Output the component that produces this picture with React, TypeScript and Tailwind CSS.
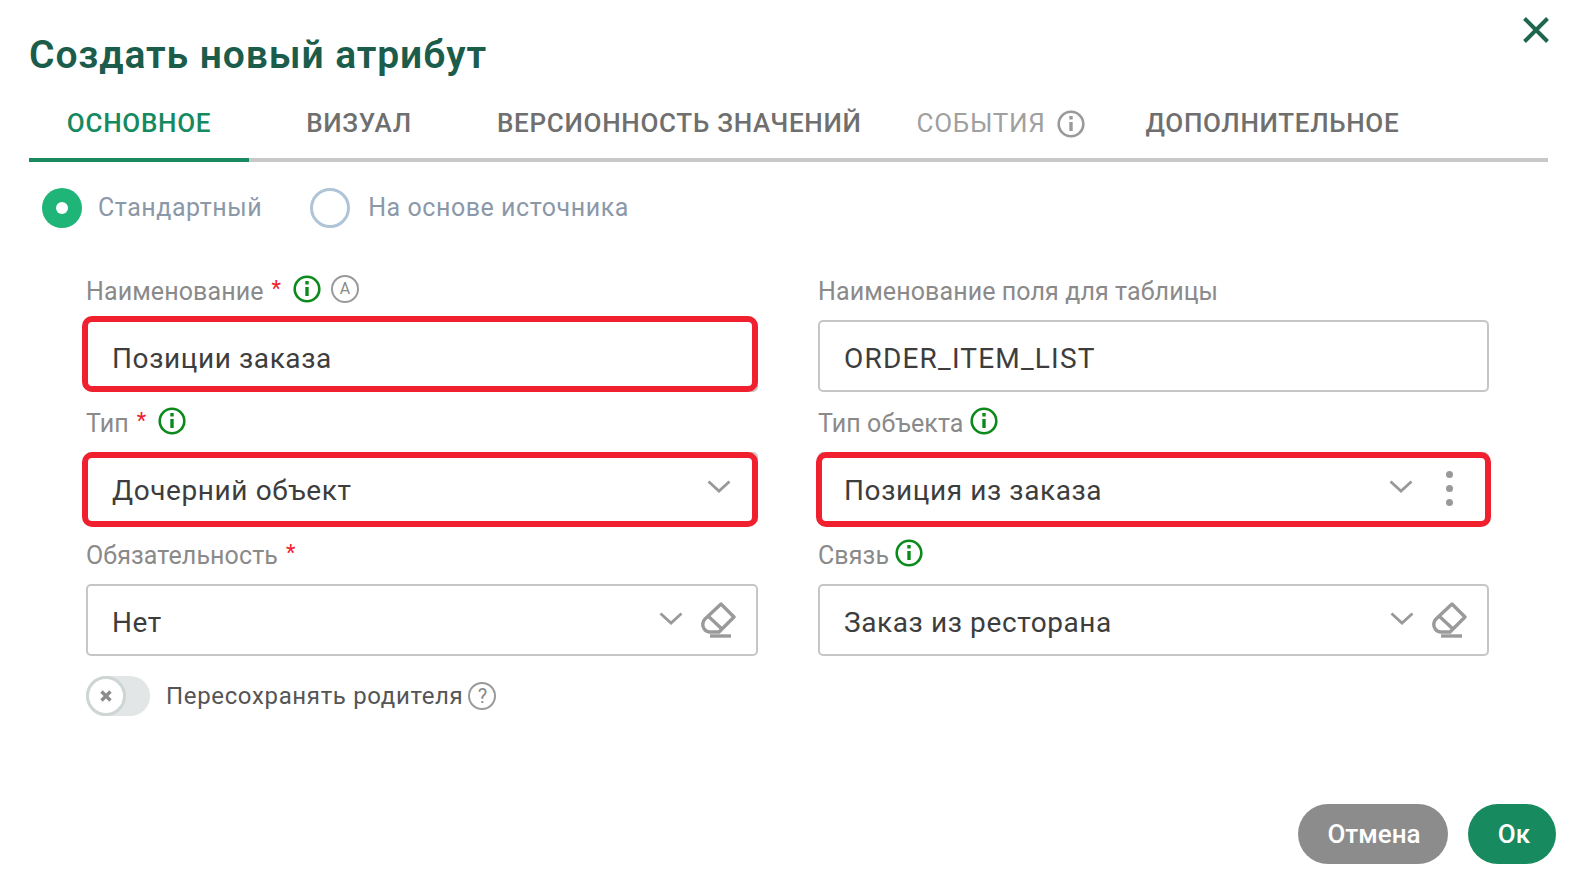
import React from 'react';

const InfoIcon = ({ color = 'text-[#0b8a1c]' }: { color?: string }) => (
    <svg viewBox="0 0 28 28" className={`h-7 w-7 shrink-0 ${color}`} fill="none" stroke="currentColor">
        <circle cx="14" cy="14" r="12.3" strokeWidth="2.6" />
        <path d="M14 12v9" strokeWidth="3.4" />
        <path d="M14 6v3.5" strokeWidth="3.4" />
    </svg>
);

const Chevron = () => (
    <svg viewBox="0 0 24 13" className="-mt-[3px] h-[13px] w-6 shrink-0" fill="none" stroke="#999999" strokeWidth="2.8">
        <path d="M1.5 1.5 12 11 22.5 1.5" />
    </svg>
);

const EraserIcon = () => (
    <svg viewBox="0 0 36 36" className="h-9 w-9 shrink-0" fill="none" stroke="#9a9a9a" strokeWidth="3.4">
        <path d="M21 2 34 15 19 30 H10 C5 30 2 25 3 21 C3 19 4 18 5 17 Z" strokeLinejoin="round" />
        <path d="M8 14 22 27" />
        <path d="M10 34H31" />
    </svg>
);

const Label = ({ text, required, children }: { text: string; required?: boolean; children?: React.ReactNode }) => (
    <div className="flex h-[29px] items-center text-[25px] leading-[29px] tracking-[0.1px] text-[#8a8a8a]">
        <span>{text}</span>
        {required && <span className="ml-2 mr-[6px] -mt-1.5 text-[22px] text-[#f0202f]">*</span>}
        {children && <span className="ml-[6px] flex items-center gap-[10px] -mt-1.5">{children}</span>}
    </div>
);

const Field = ({
    value,
    highlight,
    valueClass = 'tracking-[0.6px]',
    children,
}: {
    value: string;
    highlight?: string;
    valueClass?: string;
    children?: React.ReactNode;
}) => (
    <div className="relative mt-[14px] flex h-[72px] items-center rounded-[5px] border-2 border-[#c6c6c6] pl-[24px] pr-[25px] text-[28px] text-[#3d3d3d]">
        <span className={`flex-1 pt-[6px] ${valueClass}`}>{value}</span>
        {children}
        {highlight && <div className={`absolute rounded-[10px] border-[6px] border-[#f0202f] ${highlight}`} />}
    </div>
);

const Tab = ({ text, active, muted, children }: { text: string; active?: boolean; muted?: boolean; children?: React.ReactNode }) => (
    <div
        className={`-mb-1 flex h-[75px] min-w-[220px] items-center justify-center gap-3 border-b-4 pt-[2px] text-[26px] tracking-[0.7px] uppercase ${
            muted ? 'pl-[27px] pr-[32px]' : 'px-7'
        } ${active ? 'border-[#178a5f] font-medium text-[#15895f]' : 'border-transparent'} ${
            muted ? 'text-[#a0a0a0]' : active ? '' : 'font-medium text-[#6f6f6f]'
        }`}
    >
        <span>{text}</span>
        {children}
    </div>
);

const App: React.FC = () => {
    return (
        <div className="relative h-[874px] w-[1574px] overflow-hidden bg-white font-['Roboto',sans-serif]">
            <button className="absolute right-[25px] top-[17px] text-[#1f6650]">
                <svg viewBox="0 0 26 26" className="h-[26px] w-[26px]" stroke="currentColor" strokeWidth="4">
                    <path d="M1.5 1.5 24.5 24.5M24.5 1.5 1.5 24.5" />
                </svg>
            </button>

            <div className="pl-[29px] pr-[26px]">
                <h1 className="pt-[32px] text-[39px] leading-[46px] font-semibold tracking-[0.9px] text-[#1b5c4b]">Создать новый атрибут</h1>

                <div className="mt-[9px] flex border-b-4 border-[#c8c8c8]">
                    <Tab text="Основное" active />
                    <Tab text="Визуал" />
                    <Tab text="Версионность значений" />
                    <Tab text="События" muted>
                        <InfoIcon color="text-[#9a9a9a]" />
                    </Tab>
                    <Tab text="Дополнительное" />
                </div>

                <div className="mt-[26px] flex items-center pl-[13px] text-[25px] tracking-[0.55px] text-[#8b98a8]">
                    <span className="flex h-10 w-10 items-center justify-center rounded-full bg-[#1fb578]">
                        <span className="h-3 w-3 rounded-full bg-white" />
                    </span>
                    <span className="ml-4">Стандартный</span>
                    <span className="ml-[48px] h-10 w-10 rounded-full border-[3px] border-[#b0c4d8]" />
                    <span className="ml-[18px]">На основе источника</span>
                </div>

                <div className="mt-[49px] grid grid-cols-[672px_671px] gap-x-[60px] gap-y-[17px] pl-[57px]">
                    <div>
                        <Label text="Наименование" required>
                            <InfoIcon />
                            <span className="flex h-7 w-7 items-center justify-center rounded-full border-2 border-[#9a9a9a] text-[16px] text-[#8a8a8a]">A</span>
                        </Label>
                        <Field value="Позиции заказа" highlight="-left-[6px] -right-[2px] -top-[6px] -bottom-[2px]" />
                    </div>
                    <div>
                        <Label text="Наименование поля для таблицы" />
                        <Field value="ORDER_ITEM_LIST" valueClass="tracking-[1.2px]" />
                    </div>
                    <div>
                        <Label text="Тип" required>
                            <InfoIcon />
                        </Label>
                        <Field value="Дочерний объект" highlight="-left-[6px] -right-[2px] -top-[2px] -bottom-[5px]">
                            <Chevron />
                        </Field>
                    </div>
                    <div>
                        <Label text="Тип объекта">
                            <InfoIcon />
                        </Label>
                        <Field value="Позиция из заказа" highlight="-left-[4px] -right-[4px] -top-[2px] -bottom-[5px]">
                            <Chevron />
                            <span className="ml-[33px] mr-[9px] flex flex-col gap-[7px]">
                                <span className="h-[7px] w-[7px] rounded-full bg-[#999999]" />
                                <span className="h-[7px] w-[7px] rounded-full bg-[#999999]" />
                                <span className="h-[7px] w-[7px] rounded-full bg-[#999999]" />
                            </span>
                        </Field>
                    </div>
                    <div>
                        <Label text="Обязательность" required />
                        <Field value="Нет">
                            <Chevron />
                            <span className="ml-[17px] -mr-[5px]">
                                <EraserIcon />
                            </span>
                        </Field>
                    </div>
                    <div>
                        <Label text="Связь">
                            <InfoIcon />
                        </Label>
                        <Field value="Заказ из ресторана">
                            <Chevron />
                            <span className="ml-[17px] -mr-[5px]">
                                <EraserIcon />
                            </span>
                        </Field>
                    </div>
                </div>

                <div className="mt-[20px] flex items-center pl-[57px]">
                    <span className="flex h-10 w-16 items-center rounded-full bg-[#e2e6e6]">
                        <span className="flex h-10 w-10 items-center justify-center rounded-full border-[3px] border-[#cdd5d5] bg-white">
                            <svg viewBox="0 0 12 12" className="h-3 w-3" stroke="#8c8c8c" strokeWidth="3.4">
                                <path d="M1.5 1.5 10.5 10.5M10.5 1.5 1.5 10.5" />
                            </svg>
                        </span>
                    </span>
                    <span className="ml-[16px] text-[24px] tracking-[0.65px] text-[#555555]">Пересохранять родителя</span>
                    <span className="ml-[5px] flex h-7 w-7 items-center justify-center rounded-full border-2 border-[#9a9a9a] text-[20px] text-[#8a8a8a]">?</span>
                </div>

                <div className="mt-[88px] -mr-[8px] flex justify-end gap-5">
                    <button className="h-[60px] w-[150px] rounded-full bg-[#8c8c8c] pl-[2px] text-[26px] font-medium text-white">Отмена</button>
                    <button className="h-[60px] w-[88px] rounded-full bg-[#178b5f] pl-[4px] text-[26px] font-medium text-white">Ок</button>
                </div>
            </div>
        </div>
    );
};

export default App;
